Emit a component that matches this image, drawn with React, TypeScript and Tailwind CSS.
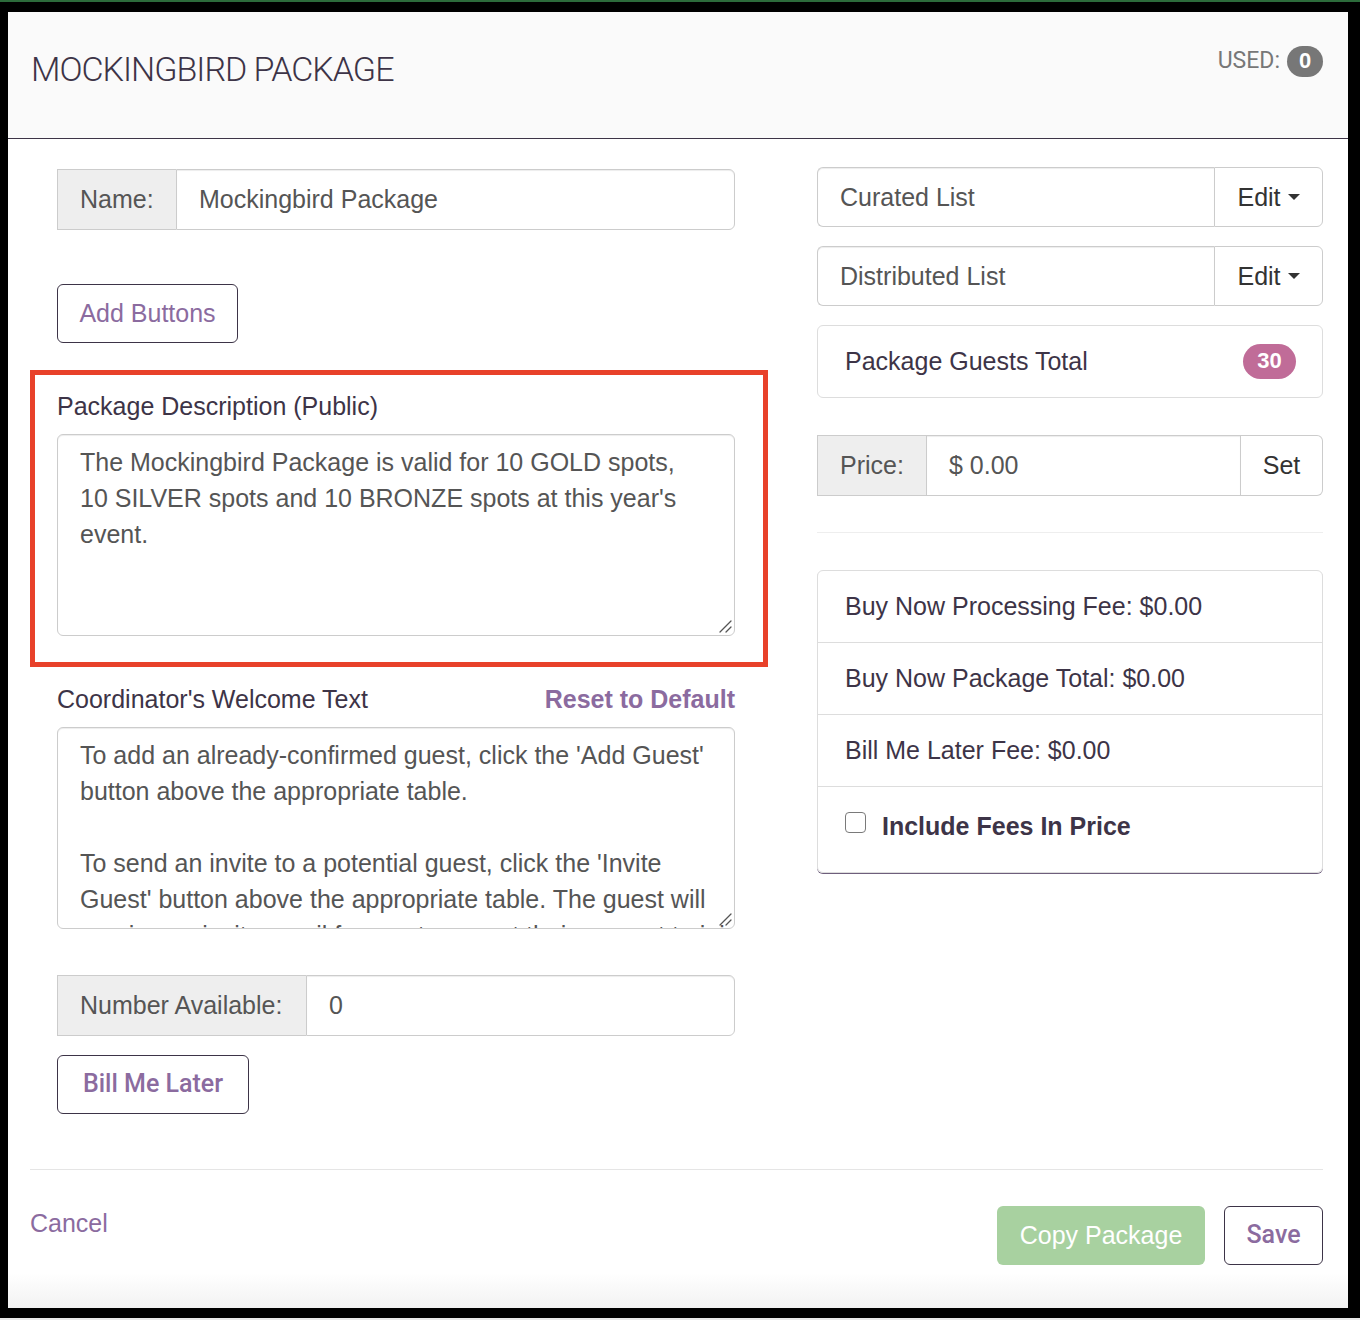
import React from "react";

const ink = "text-[#3d3447]";
const purple = "text-[#8b6b9f]";

function Caret() {
  return (
    <span className="ml-[7px] inline-block h-0 w-0 border-x-[6px] border-t-[6px] border-x-transparent border-t-[#333]" />
  );
}

// Textarea with the little diagonal resize grip in its bottom-right corner
function TextBox({ value }: { value: string }) {
  return (
    <div className="relative mt-[13px]">
      <textarea
        readOnly
        className="block h-[202px] w-full resize-none overflow-hidden whitespace-pre rounded-[6px] border border-[#ccc] px-[22px] pt-[9px] leading-[36px] text-[#555] shadow-[inset_0_1px_1px_rgba(0,0,0,0.075)] outline-none"
        value={value}
      />
      <svg
        className="pointer-events-none absolute bottom-[3px] right-[3px]"
        width="14"
        height="14"
        viewBox="0 0 14 14"
      >
        <path d="M13 2 L2 13 M13 8 L8 13" stroke="#555" strokeWidth="1.3" strokeLinecap="round" />
      </svg>
    </div>
  );
}

function AddonInput({
  label,
  value,
  addonWidth,
  children,
}: {
  label: string;
  value: string;
  addonWidth: string;
  children?: React.ReactNode;
}) {
  return (
    <div className="flex h-[61px]">
      <div
        className={`${addonWidth} flex shrink-0 items-center border border-r-0 border-[#ccc] bg-[#eee] pl-[22px] text-[#555]`}
      >
        {label}
      </div>
      <div
        className={`flex flex-1 items-center border border-[#ccc] pl-[22px] text-[#555] shadow-[inset_0_1px_1px_rgba(0,0,0,0.075)] ${
          children ? "" : "rounded-r-[6px]"
        }`}
      >
        {value}
      </div>
      {children}
    </div>
  );
}

function ListDropdown({ label }: { label: string }) {
  return (
    <div className="flex h-[60px]">
      <div className="flex flex-1 items-center rounded-l-[6px] border border-r-0 border-[#ccc] pl-[22px] text-[#555] shadow-[inset_0_1px_1px_rgba(0,0,0,0.075)]">
        {label}
      </div>
      <button className="flex w-[109px] items-center justify-center rounded-r-[6px] border border-[#ccc] bg-white text-[#333]">
        Edit
        <Caret />
      </button>
    </div>
  );
}

export default function App() {
  return (
    <div className="flex h-[1320px] w-[1360px] flex-col bg-black font-['Liberation_Sans',Arial,sans-serif] text-[25px] leading-[30px]">
      <div className="h-[2px] bg-[#2c6b3b]" />
      <div className="flex flex-1 pb-[10px] pl-[8px] pr-[12px] pt-[10px]">
        <div className="flex flex-1 flex-col bg-white">
          {/* header */}
          <div className="flex h-[127px] items-start justify-between border-b border-[#3d3447] bg-[#fafafa] pl-[23px] pr-[25px]">
            <h1
              className={`pt-[40px] font-['Roboto',sans-serif] text-[34px] font-light leading-none tracking-[-1px] ${ink}`}
            >
              MOCKINGBIRD PACKAGE
            </h1>
            <div className="flex items-center gap-[7px] pt-[34px]">
              <span className="font-['Roboto',sans-serif] text-[23px] leading-[28px] text-[#777]">
                USED:
              </span>
              <span className="flex h-[31px] w-[36px] items-center justify-center rounded-full bg-[#777] text-[22px] font-bold leading-none text-white">
                0
              </span>
            </div>
          </div>

          {/* body */}
          <div className="flex gap-[82px] pb-[55px] pl-[49px] pr-[25px] pt-[30px]">
            {/* left column */}
            <div className="flex w-[678px] flex-col">
              <AddonInput label="Name:" value="Mockingbird Package" addonWidth="w-[119px]" />

              <button
                className={`mt-[54px] h-[59px] w-[181px] rounded-[6px] border border-[#3d3447] bg-white ${purple}`}
              >
                Add Buttons
              </button>

              <div className="-ml-[27px] -mr-[33px] mt-[27px] border-[5px] border-[#e8412a] pb-[26px] pl-[22px] pr-[28px] pt-[16px]">
                <div className={ink}>Package Description (Public)</div>
                <TextBox
                  value={
                    "The Mockingbird Package is valid for 10 GOLD spots,\n10 SILVER spots and 10 BRONZE spots at this year's\nevent."
                  }
                />
              </div>

              <div className="mt-[17px] flex items-center justify-between">
                <span className={ink}>Coordinator's Welcome Text</span>
                <a className={`font-bold ${purple}`}>Reset to Default</a>
              </div>
              <TextBox
                value={
                  "To add an already-confirmed guest, click the 'Add Guest'\nbutton above the appropriate table.\n\nTo send an invite to a potential guest, click the 'Invite\nGuest' button above the appropriate table. The guest will\nreceive an invite email for you to accept their request to join."
                }
              />

              <div className="mt-[46px]">
                <AddonInput label="Number Available:" value="0" addonWidth="w-[249px]" />
              </div>

              <button
                className={`mt-[19px] h-[59px] w-[192px] rounded-[6px] border border-[#3d3447] bg-white font-['Roboto',sans-serif] font-medium ${purple}`}
              >
                Bill Me Later
              </button>
            </div>

            {/* right column */}
            <div className="-mt-[2px] flex flex-1 flex-col">
              <ListDropdown label="Curated List" />
              <div className="mt-[19px]">
                <ListDropdown label="Distributed List" />
              </div>

              <div
                className={`mt-[19px] flex h-[73px] items-center justify-between rounded-[6px] border border-[#ddd] pl-[27px] pr-[26px] ${ink}`}
              >
                <span>Package Guests Total</span>
                <span className="flex h-[35px] w-[53px] items-center justify-center rounded-full bg-[#c06c98] text-[22px] font-bold leading-none text-white">
                  30
                </span>
              </div>

              <div className="mt-[37px]">
                <AddonInput label="Price:" value="$ 0.00" addonWidth="w-[109px]">
                  <button className="w-[82px] shrink-0 rounded-r-[6px] border border-l-0 border-[#ccc] bg-white text-[#333]">
                    Set
                  </button>
                </AddonInput>
              </div>

              <div className="mt-[36px] h-px bg-[#eee]" />

              <div
                className={`mt-[37px] flex flex-col rounded-[6px] border border-[#ddd] shadow-[0_1px_0_#6e5e7c] ${ink}`}
              >
                <div className="flex h-[72px] items-center border-b border-[#ddd] pl-[27px]">
                  Buy Now Processing Fee: $0.00
                </div>
                <div className="flex h-[72px] items-center border-b border-[#ddd] pl-[27px]">
                  Buy Now Package Total: $0.00
                </div>
                <div className="flex h-[72px] items-center border-b border-[#ddd] pl-[27px]">
                  Bill Me Later Fee: $0.00
                </div>
                <label className="flex h-[85px] items-start gap-[16px] pl-[27px] pt-[24px]">
                  <span className="mt-[1px] block h-[21px] w-[21px] rounded-[4px] border border-[#7a7a7a] bg-white" />
                  <span className="font-bold">Include Fees In Price</span>
                </label>
              </div>
            </div>
          </div>

          {/* footer */}
          <div className="flex flex-1 flex-col bg-linear-to-b from-white from-75% to-[#f2f2f2]">
            <div className="ml-[22px] mr-[25px] border-t border-[#e5e5e5]" />
            <div className="flex items-start justify-between pb-[43px] pl-[22px] pr-[25px] pt-[36px]">
              <a className={`mt-[2px] ${purple}`}>Cancel</a>
              <div className="flex gap-[19px]">
                <button className="h-[59px] w-[208px] rounded-[6px] bg-[#a8d1a0] text-white">
                  Copy Package
                </button>
                <button
                  className={`h-[59px] w-[99px] rounded-[6px] border border-[#3d3447] bg-white font-['Roboto',sans-serif] font-medium ${purple}`}
                >
                  Save
                </button>
              </div>
            </div>
          </div>
        </div>
      </div>
      <div className="h-[3px] bg-[#e8e8e8]" />
    </div>
  );
}
